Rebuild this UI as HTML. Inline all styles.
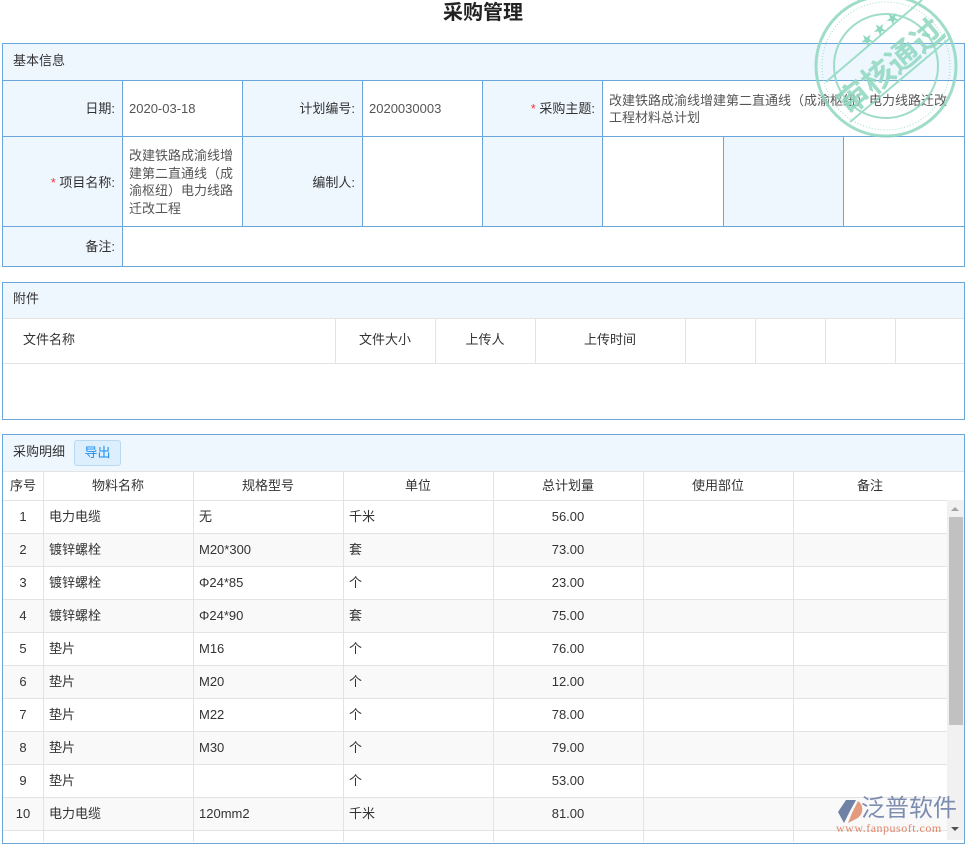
<!DOCTYPE html>
<html><head><meta charset="utf-8"><style>
*{margin:0;padding:0;box-sizing:border-box}
body{width:966px;height:842px;overflow:hidden;background:#fff;font-family:"Liberation Sans","Noto Sans CJK SC",sans-serif;font-size:13px;line-height:17px;color:#333;position:relative}
.a{position:absolute}
.b{border:1px solid #6aa6da}
.lb{background:#eef6fe}
.t{white-space:nowrap}
.g{position:absolute;background:#e3e3e3}
.bl{position:absolute;background:#6aa6da}
</style></head><body>
<div class="a t" style="left:0;width:966px;top:0;text-align:center;font-size:20px;font-weight:bold;color:#222;line-height:26px">采购管理</div>

<!-- basic info -->
<div class="a b" style="left:2px;top:43px;width:963px;height:224px;background:#fff"></div>
<div class="a lb" style="left:3px;top:44px;width:961px;height:36px"></div>
<div class="a t" style="left:13px;top:52px">基本信息</div>
<div class="a lb" style="left:3px;top:81px;width:119px;height:185px"></div>
<div class="a lb" style="left:243px;top:81px;width:119px;height:145px"></div>
<div class="a lb" style="left:483px;top:81px;width:119px;height:145px"></div>
<div class="a lb" style="left:724px;top:137px;width:119px;height:89px"></div>
<div class="bl" style="left:2px;top:80px;width:963px;height:1px"></div>
<div class="bl" style="left:2px;top:136px;width:963px;height:1px"></div>
<div class="bl" style="left:2px;top:226px;width:963px;height:1px"></div>
<div class="bl" style="left:122px;top:80px;width:1px;height:187px"></div>
<div class="bl" style="left:242px;top:80px;width:1px;height:146px"></div>
<div class="bl" style="left:362px;top:80px;width:1px;height:146px"></div>
<div class="bl" style="left:482px;top:80px;width:1px;height:146px"></div>
<div class="bl" style="left:602px;top:80px;width:1px;height:146px"></div>
<div class="bl" style="left:723px;top:136px;width:1px;height:90px"></div>
<div class="bl" style="left:843px;top:136px;width:1px;height:90px"></div>
<div class="a t" style="left:2px;width:113px;text-align:right;top:100px">日期:</div>
<div class="a t" style="left:129px;top:100px;color:#555">2020-03-18</div>
<div class="a t" style="left:242px;width:113px;text-align:right;top:100px">计划编号:</div>
<div class="a t" style="left:369px;top:100px;color:#555">2020030003</div>
<div class="a t" style="left:482px;width:113px;text-align:right;top:100px"><span style="color:#f33">*</span> 采购主题:</div>
<div class="a" style="left:609px;top:92px;width:350px;line-height:17px;color:#555">改建铁路成渝线增建第二直通线（成渝枢纽）电力线路迁改工程材料总计划</div>
<div class="a t" style="left:2px;width:113px;text-align:right;top:174px"><span style="color:#f33">*</span> 项目名称:</div>
<div class="a" style="left:129px;top:147px;width:108px;line-height:17.5px;color:#555">改建铁路成渝线增建第二直通线（成渝枢纽）电力线路迁改工程</div>
<div class="a t" style="left:242px;width:113px;text-align:right;top:174px">编制人:</div>
<div class="a t" style="left:2px;width:113px;text-align:right;top:238px">备注:</div>

<!-- attachments -->
<div class="a b" style="left:2px;top:282px;width:963px;height:138px"></div>
<div class="a lb" style="left:3px;top:283px;width:961px;height:35px"></div>
<div class="a t" style="left:13px;top:290px">附件</div>
<div class="g" style="left:3px;top:318px;width:961px;height:1px"></div>
<div class="g" style="left:3px;top:363px;width:961px;height:1px"></div>
<div class="g" style="left:335px;top:318px;width:1px;height:45px"></div>
<div class="g" style="left:435px;top:318px;width:1px;height:45px"></div>
<div class="g" style="left:535px;top:318px;width:1px;height:45px"></div>
<div class="g" style="left:685px;top:318px;width:1px;height:45px"></div>
<div class="g" style="left:755px;top:318px;width:1px;height:45px"></div>
<div class="g" style="left:825px;top:318px;width:1px;height:45px"></div>
<div class="g" style="left:895px;top:318px;width:1px;height:45px"></div>
<div class="a t" style="left:23px;top:331px">文件名称</div>
<div class="a t" style="left:335px;width:100px;text-align:center;top:331px">文件大小</div>
<div class="a t" style="left:435px;width:100px;text-align:center;top:331px">上传人</div>
<div class="a t" style="left:535px;width:150px;text-align:center;top:331px">上传时间</div>

<!-- detail -->
<div class="a b" style="left:2px;top:434px;width:963px;height:410px"></div>
<div class="a lb" style="left:3px;top:435px;width:961px;height:36px"></div>
<div class="a t" style="left:13px;top:443px">采购明细</div>
<div class="a t" style="left:74px;top:440px;width:47px;height:26px;background:#ddeefc;border:1px solid #b9d9f3;border-radius:3px;color:#1a8ef0;text-align:center;line-height:24px">导出</div>
<div class="g" style="left:3px;top:471px;width:961px;height:1px"></div>
<div id="tb"></div>
<div class="a" style="left:947px;top:500px;width:17px;height:340px;background:#f1f1f1"></div>
<div class="a" style="left:949px;top:517px;width:14px;height:208px;background:#c1c1c1"></div>
<div class="a" style="left:951px;top:507px;width:0;height:0;border-left:4px solid transparent;border-right:4px solid transparent;border-bottom:4px solid #a3a3a3"></div>
<div class="a" style="left:951px;top:827px;width:0;height:0;border-left:4px solid transparent;border-right:4px solid transparent;border-top:4px solid #505050"></div>

<!-- logo -->
<div class="a" style="left:836px;top:797px"><svg width="30" height="30" viewBox="0 0 30 30"><path d="M10 3 L20 3 L14 14 L8 26 L2 15 Z" fill="#6f82a6"/><path d="M22 4 C28 8 28 18 20 22 L12 26 L16 16 Z" fill="#e49a7c"/></svg></div>
<div class="a t" style="left:861px;top:795px;font-size:24px;line-height:28px;color:#7d8db0;letter-spacing:0px">泛普软件</div>
<div class="a t" style="left:836px;top:821px;font-size:12px;line-height:14px;color:#e0876a;font-family:'Liberation Serif',serif;letter-spacing:0.5px">www.fanpusoft.com</div>

<!-- stamp -->
<svg class="a" style="left:810px;top:-10px" width="156" height="150" viewBox="0 0 156 150">
<g fill="none" stroke="#8fd8c0" opacity="0.85">
<circle cx="76" cy="76" r="70" stroke-width="3"/>
<circle cx="76" cy="76" r="64" stroke-width="1" stroke-dasharray="1 2"/>
<circle cx="76" cy="76" r="52" stroke-width="2"/>
<line x1="16" y1="92" x2="112" y2="10" stroke-width="2"/>
<line x1="40" y1="132" x2="140" y2="48" stroke-width="2"/>
</g>
<text x="80" y="88" transform="rotate(-40 80 76)" text-anchor="middle" font-size="32" font-weight="bold" fill="#8fd8c0" opacity="0.85" font-family="'Noto Sans CJK SC',sans-serif">审核通过</text>
<text x="50" y="52" font-size="13" fill="#8fd8c0" transform="rotate(-40 60 48)">★ ★ ★</text>
</svg>

<script>
var rows=[["1","电力电缆","无","千米","56.00"],["2","镀锌螺栓","M20*300","套","73.00"],["3","镀锌螺栓","Φ24*85","个","23.00"],["4","镀锌螺栓","Φ24*90","套","75.00"],["5","垫片","M16","个","76.00"],["6","垫片","M20","个","12.00"],["7","垫片","M22","个","78.00"],["8","垫片","M30","个","79.00"],["9","垫片","","个","53.00"],["10","电力电缆","120mm2","千米","81.00"]];
var h='';var cols=[3,43,193,343,493,643,793,947];
h+='<div class="g" style="left:3px;top:500px;width:961px;height:1px"></div>';
var hd=["序号","物料名称","规格型号","单位","总计划量","使用部位","备注"];
for(var i=0;i<7;i++){h+='<div class="a t" style="left:'+cols[i]+'px;width:'+(cols[i+1]-cols[i])+'px;text-align:center;top:477px">'+hd[i]+'</div>';}
for(var r=0;r<10;r++){var y=500+r*33;
if(r%2==1)h+='<div class="a" style="left:3px;top:'+(y+1)+'px;width:944px;height:32px;background:#f9f9f9"></div>';
h+='<div class="g" style="left:3px;top:'+(y+33)+'px;width:944px;height:1px"></div>';
var d=rows[r];var ty=y+8;
h+='<div class="a t" style="left:3px;width:40px;text-align:center;top:'+ty+'px">'+d[0]+'</div>';
h+='<div class="a t" style="left:49px;top:'+ty+'px">'+d[1]+'</div>';
h+='<div class="a t" style="left:199px;top:'+ty+'px">'+d[2]+'</div>';
h+='<div class="a t" style="left:349px;top:'+ty+'px">'+d[3]+'</div>';
h+='<div class="a t" style="left:493px;width:150px;text-align:center;top:'+ty+'px">'+d[4]+'</div>';}
for(var i=1;i<7;i++)h+='<div class="g" style="left:'+cols[i]+'px;top:471px;width:1px;height:371px"></div>';
document.getElementById('tb').outerHTML=h;
</script>
</body></html>
